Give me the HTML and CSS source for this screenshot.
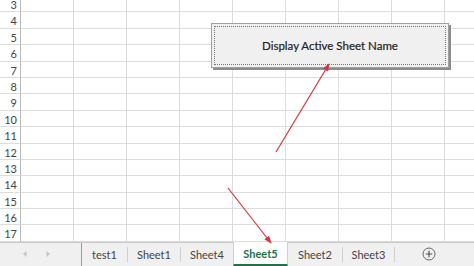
FILE: index.html
```html
<!DOCTYPE html>
<html lang="en">
<head>
  <meta charset="UTF-8">
  <title>Sheet5</title>
  <link rel="stylesheet" href="styles.css">
</head>
<body>
  <div class="sheet" id="sheet"></div>

  <div class="tabbar">
    <div class="nav">
      <svg width="8" height="8" viewBox="0 0 8 8"><path d="M5.5 1 L2 4 L5.5 7 Z" fill="#c4c4c4"/></svg>
      <svg width="8" height="8" viewBox="0 0 8 8"><path d="M2.5 1 L6 4 L2.5 7 Z" fill="#c4c4c4"/></svg>
    </div>
    <div class="tab w45">test1</div>
    <div class="tab w53">Sheet1</div>
    <div class="tab w52 nosep">Sheet4</div>
    <div class="tab active">Sheet5</div>
    <div class="tab w55">Sheet2</div>
    <div class="tab w52">Sheet3</div>
    <div class="add">
      <svg width="14" height="14" viewBox="0 0 14 14">
        <circle cx="7" cy="7" r="6" fill="none" stroke="#666" stroke-width="1"/>
        <path d="M7 3.8 V10.2 M3.8 7 H10.2" stroke="#555" stroke-width="1.2"/>
      </svg>
    </div>
  </div>

  <div class="macro-btn">
    <div class="macro-inner">Display Active Sheet Name</div>
  </div>

  <svg class="arrows" width="474" height="266" viewBox="0 0 474 266">
    <defs>
      <marker id="head" markerWidth="8" markerHeight="8" refX="7" refY="4" orient="auto" markerUnits="userSpaceOnUse">
        <path d="M0 1 L8 4 L0 7 Z" fill="#d8333f"/>
      </marker>
    </defs>
    <line x1="276" y1="152" x2="329" y2="64" stroke="#d8333f" stroke-width="1.2" marker-end="url(#head)"/>
    <line x1="228" y1="188" x2="271" y2="243" stroke="#d8333f" stroke-width="1.2" marker-end="url(#head)"/>
  </svg>

  <script>
    const sheet = document.getElementById("sheet");
    for (let r = 3; r <= 17; r++) {
      const head = document.createElement("div");
      head.className = "rowhead";
      head.textContent = r;
      sheet.appendChild(head);
      for (let c = 0; c < 9; c++) {
        const cell = document.createElement("div");
        cell.className = "cell";
        sheet.appendChild(cell);
      }
    }
  </script>
</body>
</html>
```

FILE: styles.css
```css
body {
  margin: 0;
  width: 474px;
  height: 266px;
  overflow: hidden;
  background-color: white;
  font-family: "Lato", "Noto Sans", sans-serif;
  position: relative;
}

.sheet {
  display: grid;
  grid-template-columns: 21px repeat(9, 53px);
  grid-auto-rows: 16.4px;
  margin-top: -4px;
}

.rowhead {
  border-right: 1px solid #b8b8b8;
  border-bottom: 1px solid #dcdcdc;
  font-size: 11px;
  color: #444;
  text-align: right;
  padding-right: 3px;
  padding-top: 2px;
  line-height: 14px;
}

.cell {
  border-right: 1px solid #dcdcdc;
  border-bottom: 1px solid #dcdcdc;
}

.tabbar {
  display: flex;
  align-items: stretch;
  height: 23px;
  background-color: #f0f0f0;
  border-top: 1px solid #c8c8c8;
  font-size: 11px;
  color: #444;
}

.nav {
  width: 82px;
  display: flex;
  align-items: center;
  gap: 15px;
  padding-left: 21px;
  box-sizing: border-box;
  border-right: 1px solid #9a9a9a;
}

.tab {
  display: flex;
  align-items: center;
  justify-content: center;
  border-right: 1px solid #cfcfcf;
  margin: 4px 0;
  box-sizing: border-box;
}

.tab.nosep {
  border-right: none;
}

.w45 { width: 46px; }
.w52 { width: 52px; }
.w53 { width: 53px; }
.w55 { width: 55px; }

.tab.active {
  width: 55px;
  margin: -1px 0 0;
  background-color: white;
  color: #217346;
  font-weight: bold;
  border-left: 1px solid #cfcfcf;
  border-right: 1px solid #cfcfcf;
  border-bottom: 2px solid #217346;
  padding-top: 1px;
}

.add {
  display: flex;
  align-items: center;
  padding-left: 27px;
}

.macro-btn {
  position: absolute;
  left: 211px;
  top: 23px;
  width: 238px;
  height: 45px;
  box-sizing: border-box;
  background-color: #f0f0f0;
  border: 1px solid #a0a0a0;
  box-shadow: 2px 2px 0 #8c8c8c;
  padding: 2px;
}

.macro-inner {
  height: 100%;
  box-sizing: border-box;
  border: 1px dotted #777;
  display: flex;
  align-items: center;
  justify-content: center;
  font-size: 11.5px;
  color: #222;
  -webkit-text-stroke: 0.2px #222;
}

.arrows {
  position: absolute;
  left: 0;
  top: 0;
  pointer-events: none;
}
```
